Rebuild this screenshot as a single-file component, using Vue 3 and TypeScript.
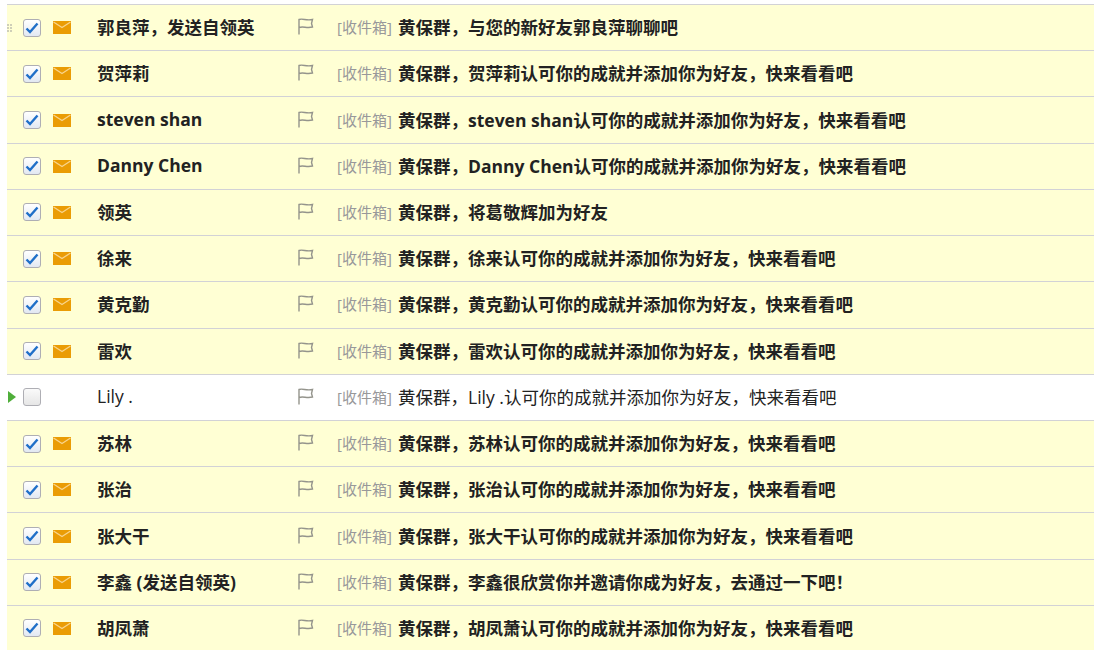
<script setup lang="ts">
interface Mail {
  from: string;
  subject: string;
  unread: boolean;
  grip?: boolean;
  arrow?: boolean;
}

const accept = (name: string) => `黄保群，${name}认可你的成就并添加你为好友，快来看看吧`;

const mails: Mail[] = [
  { from: '郭良萍，发送自领英', subject: '黄保群，与您的新好友郭良萍聊聊吧', unread: true, grip: true },
  { from: '贺萍莉', subject: accept('贺萍莉'), unread: true },
  { from: 'steven shan', subject: accept('steven shan'), unread: true },
  { from: 'Danny Chen', subject: accept('Danny Chen'), unread: true },
  { from: '领英', subject: '黄保群，将葛敬辉加为好友', unread: true },
  { from: '徐来', subject: accept('徐来'), unread: true },
  { from: '黄克勤', subject: accept('黄克勤'), unread: true },
  { from: '雷欢', subject: accept('雷欢'), unread: true },
  { from: 'Lily .', subject: accept('Lily .'), unread: false, arrow: true },
  { from: '苏林', subject: accept('苏林'), unread: true },
  { from: '张治', subject: accept('张治'), unread: true },
  { from: '张大干', subject: accept('张大干'), unread: true },
  { from: '李鑫 (发送自领英)', subject: '黄保群，李鑫很欣赏你并邀请你成为好友，去通过一下吧！', unread: true },
  { from: '胡凤萧', subject: accept('胡凤萧'), unread: true },
];
</script>

<template>
  <div class="mail-list">
    <div v-for="(mail, i) in mails" :key="i" class="mail-row" :class="{ unread: mail.unread }">
      <div class="mail-mark">
        <span v-if="mail.grip" class="grip" />
        <span v-if="mail.arrow" class="arrow" />
      </div>
      <span class="check" :class="{ on: mail.unread }">
        <svg v-if="mail.unread" width="14" height="12" viewBox="0 0 14 12">
          <path d="M1.5 6.5 L5 10 L12.5 1.5" fill="none" stroke="#1f6fc8" stroke-width="2.4" />
        </svg>
      </span>
      <div class="envelope">
        <svg v-if="mail.unread" width="18" height="13" viewBox="0 0 18 13">
          <rect width="18" height="13" fill="#ea9c05" />
          <path d="M0.5 1 L9 6.5 L17.5 1" fill="none" stroke="#f8d48c" stroke-width="1.3" />
        </svg>
      </div>
      <div class="from">{{ mail.from }}</div>
      <div class="flag">
        <svg width="16" height="17" viewBox="0 0 16 17">
          <path d="M1 16.5 V1.5 C5 0 8 3 14.5 1.5 L13.5 5.5 L14.5 9 C9 10.5 5 8 1 9.5" fill="none" stroke="#94948c" stroke-width="1.4" />
        </svg>
      </div>
      <div class="folder">[收件箱]</div>
      <div class="subject">{{ mail.subject }}</div>
    </div>
  </div>
</template>

<style>
body { background: #fff; }
</style>

<style scoped>
.mail-list {
  padding: 4px 0 0 7px;
  height: 646px;
  overflow: hidden;
  font-family: "Open Sans", "Noto Sans CJK SC", sans-serif;
  font-size: 17.5px;
  color: #222;
}

.mail-row {
  display: flex;
  align-items: center;
  box-sizing: border-box;
  height: 46.23px;
  border-top: 1px solid #d2d2d6;
  background: #fff;
}

.mail-row.unread {
  background: #ffffd4;
  font-weight: 700;
}

.mail-mark {
  width: 16px;
  flex: none;
  display: flex;
}

.grip {
  width: 6px;
  height: 9px;
  margin-top: 1px;
  background: repeating-linear-gradient(90deg, #cfcfb8 0 2px, transparent 2px 3px);
  -webkit-mask: repeating-linear-gradient(180deg, #000 0 2px, transparent 2px 3px);
  mask: repeating-linear-gradient(180deg, #000 0 2px, transparent 2px 3px);
}

.arrow {
  margin-left: 1px;
  border-left: 8px solid #4fae3a;
  border-top: 6px solid transparent;
  border-bottom: 6px solid transparent;
}

.check {
  width: 18px;
  height: 18px;
  flex: none;
  box-sizing: border-box;
  border: 1px solid #aeaeb4;
  border-radius: 3px;
  background: linear-gradient(#fafafa, #e6e6e6);
  display: flex;
  align-items: center;
  justify-content: center;
}

.check.on { background: linear-gradient(#fff, #e2e8f2); }

.envelope {
  width: 18px;
  height: 13px;
  flex: none;
  margin-left: 12px;
  display: flex;
}

.from {
  width: 201px;
  flex: none;
  margin-left: 26px;
  padding-bottom: 2px;
  white-space: nowrap;
}

.flag {
  width: 39px;
  flex: none;
  display: flex;
  margin-top: -2px;
}

.folder {
  width: 61px;
  flex: none;
  padding-bottom: 2px;
  font-size: 15px;
  font-weight: 400;
  color: #98989a;
  white-space: nowrap;
}

.subject {
  padding-bottom: 2px;
  white-space: nowrap;
}
</style>
